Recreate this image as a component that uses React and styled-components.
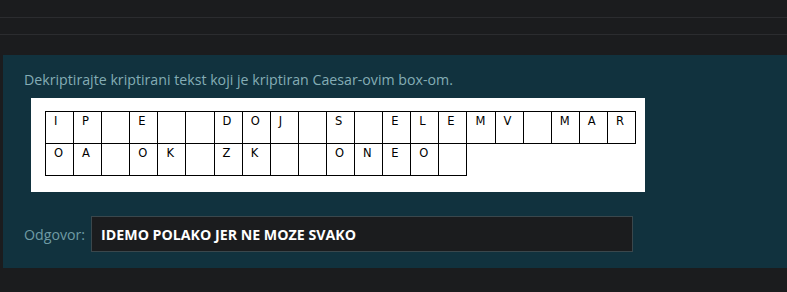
import styled, { createGlobalStyle } from "styled-components";

const GlobalStyle = createGlobalStyle`
  *, *::before, *::after {
    box-sizing: border-box;
  }
  html, body {
    margin: 0;
    padding: 0;
    background: #1b1c1e;
    font-family: "Open Sans", "Noto Sans", sans-serif;
  }
`;

const Page = styled.div`
  height: 292px;
  overflow: hidden;
`;

const TopBar = styled.div`
  height: 18px;
  border-bottom: 1px solid #2b2c2f;
`;

const SubBar = styled.div`
  height: 17px;
  border-bottom: 1px solid #2b2c2f;
`;

const Panel = styled.section`
  margin: 20px 0 0 3px;
  background: #11323e;
  padding: 15px 0 0 21px;
  height: 213px;
`;

const Prompt = styled.p`
  margin: 0;
  color: #84adb5;
  font-size: 14.2px;
  line-height: 20px;
`;

const Sheet = styled.div`
  margin: 8px 0 0 7px;
  width: 614px;
  height: 94px;
  background: #ffffff;
  padding: 13px 0 0 14px;
`;

const Grid = styled.table`
  border-collapse: collapse;
`;

const Cell = styled.td`
  width: 28.1px;
  height: 32px;
  border: 1px solid #000;
  padding: 2px 0 1px 8px;
  vertical-align: top;
  font-family: "DejaVu Sans", Verdana, sans-serif;
  font-size: 11.5px;
  line-height: 14px;
  color: #000;
`;

const AnswerRow = styled.div`
  display: flex;
  align-items: center;
  gap: 6px;
  margin-top: 24px;
`;

const Label = styled.label`
  color: #6f9ba4;
  font-size: 14.2px;
`;

const AnswerBox = styled.div`
  width: 542px;
  height: 36px;
  background: #1b1c1e;
  border: 1px solid #3a474c;
  display: flex;
  align-items: center;
  padding-left: 9px;
  color: #ffffff;
  font-weight: 700;
  font-size: 14.2px;
`;

const rows = [
  ["I", "P", "", "E", "", "", "D", "O", "J", "", "S", "", "E", "L", "E", "M", "V", "", "M", "A", "R"],
  ["O", "A", "", "O", "K", "", "Z", "K", "", "", "O", "N", "E", "O", ""],
];

export default function App() {
  return (
    <Page>
      <GlobalStyle />
      <TopBar />
      <SubBar />
      <Panel>
        <Prompt>Dekriptirajte kriptirani tekst koji je kriptiran Caesar-ovim box-om.</Prompt>
        <Sheet>
          <Grid>
            <tbody>
              {rows.map((row, r) => (
                <tr key={r}>
                  {row.map((ch, c) => (
                    <Cell key={c}>{ch}</Cell>
                  ))}
                </tr>
              ))}
            </tbody>
          </Grid>
        </Sheet>
        <AnswerRow>
          <Label>Odgovor:</Label>
          <AnswerBox>IDEMO POLAKO JER NE MOZE SVAKO</AnswerBox>
        </AnswerRow>
      </Panel>
    </Page>
  );
}
